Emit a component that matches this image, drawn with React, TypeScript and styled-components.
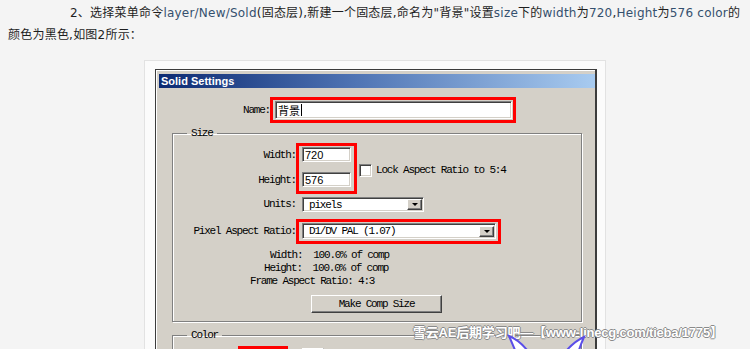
import React from 'react'
import styled, { createGlobalStyle } from 'styled-components'

const GlobalStyle = createGlobalStyle`
  html, body {
    margin: 0;
    padding: 0;
    overflow: hidden;
    background: #f4f4f4;
  }
`

const SolidSettings = () => {
    return (
        <Page>
            <GlobalStyle />

            <Intro>
                2、选择菜单命令<Latin>layer/New/Sold</Latin>(固态层),新建一个固态层,命名为"背景"设置<Latin>size</Latin>下的<Latin>width</Latin>为<Latin>720</Latin>,<Latin>Height</Latin>为<Latin>576 color</Latin>的
                <br />
                颜色为黑色,如图2所示：
            </Intro>

            <Figure>
                <Dialog>
                    <TitleBar>Solid Settings</TitleBar>

                    <NameRow>
                        <Label $width={111}>Name:</Label>
                        <Mark $width={246} $pad="1px 1px 1px 2px">
                            <TextField $height={18}>
                                <CjkText>背景</CjkText>
                                <Caret />
                            </TextField>
                        </Mark>
                    </NameRow>

                    <Group $mt={4}>
                        <Legend>Size</Legend>

                        <SizeRow>
                            <LabelColumn>
                                <Label $width={123}>Width:</Label>
                                <Label $width={123}>Height:</Label>
                            </LabelColumn>
                            <Mark $width={61} $pad="1px 3px 4px">
                                <FieldStack>
                                    <TextField $height={15}>720</TextField>
                                    <TextField $height={15}>576</TextField>
                                </FieldStack>
                            </Mark>
                            <Check />
                            <CheckLabel>Lock Aspect Ratio to 5:4</CheckLabel>
                        </SizeRow>

                        <Row $mt={3}>
                            <Label $width={123}>Units:</Label>
                            <Select $width={122} $height={15} $ml={6}>
                                <SelectText>pixels</SelectText>
                                <DropButton />
                            </Select>
                        </Row>

                        <Row $mt={7}>
                            <Label $width={123}>Pixel Aspect Ratio:</Label>
                            <Mark $width={205} $pad="1px 2px 2px 3px">
                                <Select $height={16}>
                                    <SelectText>D1/DV PAL (1.07)</SelectText>
                                    <DropButton />
                                </Select>
                            </Mark>
                        </Row>

                        <Info>
                            <InfoLine $indent={97}>Width:  100.0% of comp</InfoLine>
                            <InfoLine $indent={91}>Height:  100.0% of comp</InfoLine>
                            <InfoLine $indent={77}>Frame Aspect Ratio: 4:3</InfoLine>
                        </Info>

                        <CompButton>Make Comp Size</CompButton>
                    </Group>

                    <Group $mt={7}>
                        <Legend>Color</Legend>
                        <ColorRow>
                            <Mark $width={50} $pad="2px">
                                <Swatch />
                            </Mark>
                            <Eyedropper />
                        </ColorRow>
                    </Group>
                </Dialog>
            </Figure>

            <Watermark>雪云AE后期学习吧—【www-linecg.com/tieba/1775】</Watermark>
            <Ears viewBox="0 0 85 18" width="85" height="18">
                <path d="M10 19 Q7 12 4 5 Q14 9 22 19" fill="#fff" stroke="#5b4ee8" strokeWidth="2" />
                <path d="M62 19 Q70 10 79 6 Q76 13 74 19" fill="#fff" stroke="#5b4ee8" strokeWidth="2" />
            </Ears>
        </Page>
    )
}

export default SolidSettings

const Page = styled.div`
    position: relative;
    width: 750px;
    height: 349px;
    overflow: hidden;
    background: #f4f4f4;
`
const Intro = styled.p`
    margin: 2px 0 0;
    padding: 0 8px;
    text-indent: 62px;
    font: 12px/22px "DejaVu Sans", "Noto Sans CJK SC", sans-serif;
    letter-spacing: 0.22px;
    color: #1e1e1e;
    white-space: nowrap;
`
const Latin = styled.span`
    color: #34506e;
`
const Figure = styled.div`
    box-sizing: border-box;
    width: 462px;
    height: 420px;
    margin: 14px auto 0;
    padding: 8px 8px 0 10px;
    background: #fbfbfb;
    border: 1px solid #e2e2e2;
`
const Dialog = styled.div`
    box-sizing: border-box;
    width: 442px;
    height: 360px;
    padding: 4px 0 0 3px;
    background: #d4d0c8;
    border: 1px solid #3c3c3c;
    border-right-width: 2px;
    box-shadow: inset 1px 1px 0 #fff;
    font-family: "Liberation Mono", "Courier New", monospace;
    font-size: 11px;
    letter-spacing: -1.2px;
    color: #000;
`
const TitleBar = styled.div`
    height: 14px;
    padding-left: 2px;
    background: linear-gradient(90deg, #0c2a72 0%, #4f74b4 45%, #a8cbf0 100%);
    color: #fff;
    font: bold 11px/14px "Liberation Sans", sans-serif;
    letter-spacing: 0;
`
const Row = styled.div<{ $mt?: number }>`
    display: flex;
    align-items: center;
    margin-top: ${p => p.$mt ?? 0}px;
`
const NameRow = styled(Row)`
    margin-top: 9px;
`
const Label = styled.div<{ $width: number }>`
    flex: none;
    width: ${p => p.$width}px;
    text-align: right;
    line-height: 15px;
    white-space: pre;
`
const Mark = styled.div<{ $width: number; $pad: string }>`
    box-sizing: border-box;
    flex: none;
    width: ${p => p.$width}px;
    padding: ${p => p.$pad};
    border: 3px solid #ff0000;
`
const TextField = styled.div<{ $height: number }>`
    box-sizing: border-box;
    display: flex;
    align-items: center;
    height: ${p => p.$height}px;
    padding-left: 2px;
    background: #fff;
    border: 1px solid;
    border-color: #808080 #fff #fff #808080;
    box-shadow: inset 1px 1px 0 #404040, inset -1px -1px 0 #d4d0c8;
    font: 11px "Liberation Sans", sans-serif;
    letter-spacing: 0;
`
const CjkText = styled.span`
    font: 11px "Noto Sans CJK SC", sans-serif;
    line-height: 14px;
`
const Caret = styled.span`
    width: 1px;
    height: 12px;
    margin-left: 1px;
    background: #000;
`
const Group = styled.fieldset<{ $mt: number }>`
    min-inline-size: 0;
    margin: ${p => p.$mt}px 13px 0;
    padding: 4px 0 8px;
    border: 1px solid #808080;
    box-shadow: 1px 1px 0 #fff, inset 1px 1px 0 #fff;
`
const Legend = styled.legend`
    margin-left: 14px;
    padding: 0 4px;
    line-height: 12px;
`
const SizeRow = styled.div`
    display: flex;
    align-items: center;
`
const LabelColumn = styled.div`
    display: flex;
    flex-direction: column;
    gap: 10px;
    padding-top: 1px;
    margin-bottom: 3px;
`
const FieldStack = styled.div`
    display: flex;
    flex-direction: column;
    gap: 10px;
`
const Check = styled.span`
    box-sizing: border-box;
    flex: none;
    width: 13px;
    height: 13px;
    margin: 3px 0 0 2px;
    background: #fff;
    border: 1px solid;
    border-color: #808080 #fff #fff #808080;
    box-shadow: inset 1px 1px 0 #404040, inset -1px -1px 0 #d4d0c8;
`
const CheckLabel = styled.span`
    margin: 3px 0 0 4px;
`
const Select = styled.div<{ $width?: number; $height: number; $ml?: number }>`
    box-sizing: border-box;
    display: flex;
    align-items: center;
    width: ${p => (p.$width ? `${p.$width}px` : 'auto')};
    height: ${p => p.$height}px;
    margin-left: ${p => p.$ml ?? 0}px;
    padding: 0 1px 0 6px;
    background: #fff;
    border: 1px solid;
    border-color: #808080 #fff #fff #808080;
    box-shadow: inset 1px 1px 0 #404040, inset -1px -1px 0 #d4d0c8;
`
const SelectText = styled.span`
    flex: 1;
    line-height: 12px;
    white-space: pre;
`
const DropButton = styled.span`
    box-sizing: border-box;
    position: relative;
    flex: none;
    width: 15px;
    height: 11px;
    background: #d4d0c8;
    border: 1px solid;
    border-color: #fff #404040 #404040 #fff;
    box-shadow: inset -1px -1px 0 #808080;

    &::after {
        content: '';
        position: absolute;
        left: 4px;
        top: 3px;
        border: 3px solid transparent;
        border-top: 3px solid #000;
        border-bottom: 0;
    }
`
const Info = styled.div`
    margin-top: 5px;
`
const InfoLine = styled.div<{ $indent: number }>`
    margin-left: ${p => p.$indent}px;
    line-height: 13px;
    white-space: pre;
`
const CompButton = styled.div`
    box-sizing: border-box;
    width: 131px;
    height: 18px;
    margin: 7px 0 0 138px;
    background: #d4d0c8;
    border: 1px solid;
    border-color: #fff #404040 #404040 #fff;
    box-shadow: inset -1px -1px 0 #808080;
    text-align: center;
    line-height: 16px;
`
const ColorRow = styled.div`
    display: flex;
    align-items: flex-start;
    padding: 1px 0 0 65px;
    height: 40px;
`
const Swatch = styled.div`
    height: 17px;
    background: #000;
    border: 1px solid #fff;
    outline: 1px solid #808080;
`
const Eyedropper = styled.div`
    box-sizing: border-box;
    width: 22px;
    height: 20px;
    margin: 2px 0 0 14px;
    background: #f4f2ee;
    border: 1px solid;
    border-color: #fff #808080 #808080 #fff;
`
const Watermark = styled.div`
    position: absolute;
    left: 413px;
    top: 325px;
    font: bold 13px/16px "Liberation Sans", "Noto Sans CJK SC", sans-serif;
    letter-spacing: -0.2px;
    color: #fff;
    white-space: nowrap;
    text-shadow: 1px 0 0 #8a8a8a, -1px 0 0 #8a8a8a, 0 1px 0 #8a8a8a, 0 -1px 0 #8a8a8a;
`
const Ears = styled.svg`
    position: absolute;
    left: 505px;
    top: 331px;
`
